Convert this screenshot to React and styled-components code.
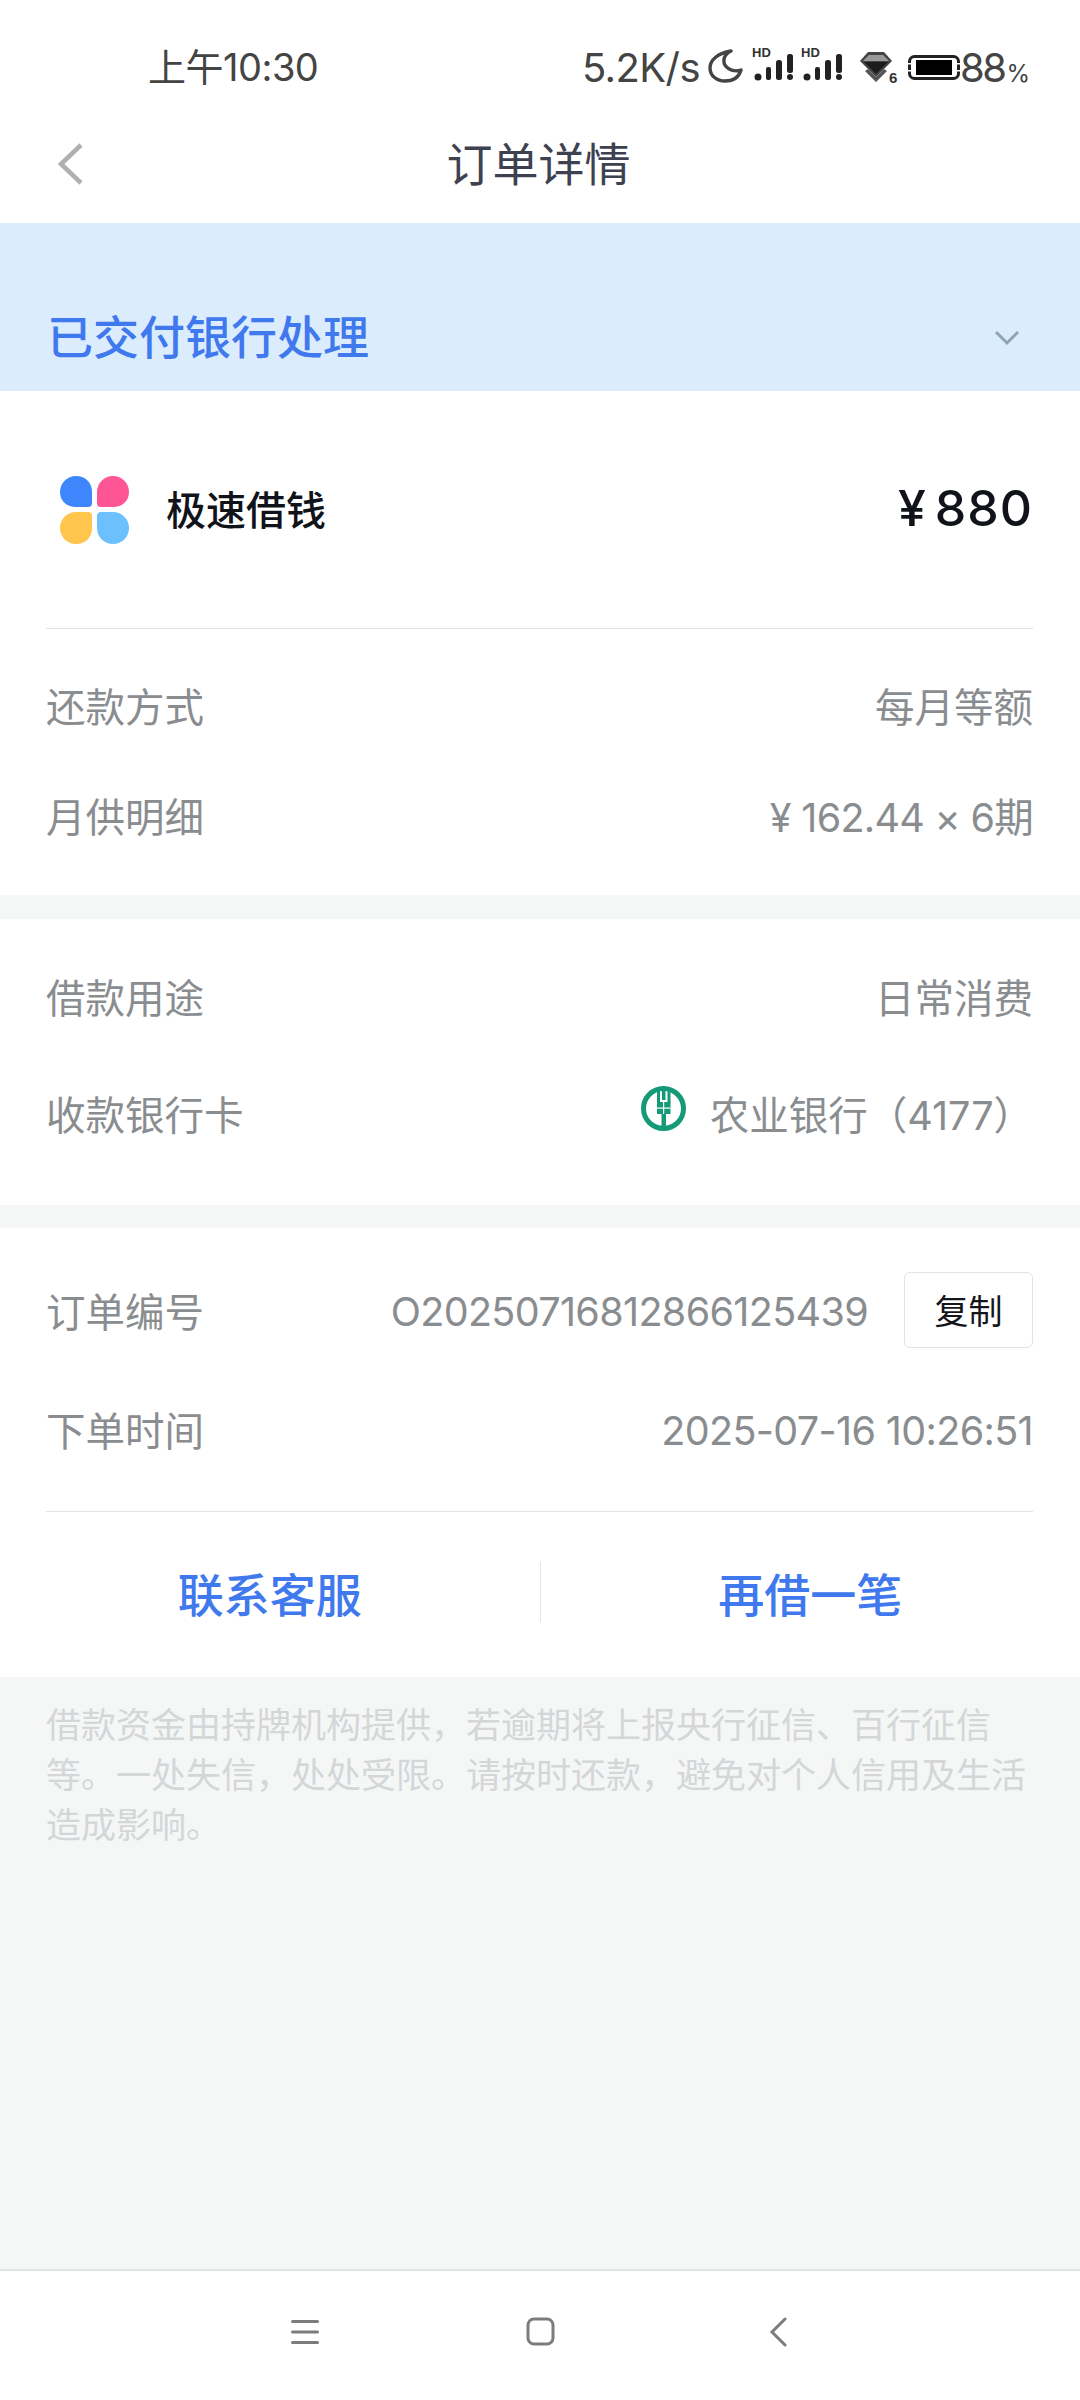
import styled, { createGlobalStyle } from 'styled-components';

const GlobalStyle = createGlobalStyle`
  html, body {
    margin: 0;
    padding: 0;
    background: #f5f7f7;
    font-family: "Inter", "Noto Sans CJK SC", sans-serif;
  }
  * { box-sizing: border-box; }
`;

const Page = styled.div`
  width: 1080px;
  height: 2400px;
  display: flex;
  flex-direction: column;
  overflow: hidden;
  background: #f5f7f7;
`;

const StatusBar = styled.div`
  height: 104px;
  padding: 30px 50px 0 148px;
  display: flex;
  align-items: center;
  justify-content: space-between;
  background: #fff;
  color: #444;
  font-size: 38px;
`;

const Time = styled.span`
  letter-spacing: -0.5px;
  padding-bottom: 6px;
`;

const StatusRight = styled.div`
  display: flex;
  align-items: center;
`;

const Speed = styled.span`
  font-size: 40px;
  letter-spacing: -0.6px;
  margin-right: 8px;
`;

const Percent = styled.span`
  font-size: 40px;
  letter-spacing: -2.5px;

  small {
    font-size: 24px;
    letter-spacing: 0;
    margin-left: 2px;
  }
`;

const Icon = styled.svg`
  display: block;
  flex: none;
  margin-left: ${props => props.$left || 0}px;
  margin-bottom: ${props => props.$up || 0}px;
`;

const NavBar = styled.div`
  position: relative;
  height: 119px;
  padding: 0 3px 6px 0;
  display: flex;
  align-items: center;
  justify-content: center;
  background: #fff;
`;

const BackIcon = styled.svg`
  position: absolute;
  left: 56px;
  top: 38px;
`;

const NavTitle = styled.div`
  font-size: 46px;
  color: #3e4150;
`;

const Banner = styled.div`
  height: 168px;
  padding: 0 60px 24px 47px;
  display: flex;
  align-items: flex-end;
  justify-content: space-between;
  background: #dbecfd;
`;

const BannerText = styled.div`
  font-size: 46px;
  line-height: 60px;
  font-weight: 500;
  color: #4078ee;
`;

const BannerChevron = styled.svg`
  margin: 0 0 21px;
`;

const Section = styled.div`
  background: #fff;
  padding: ${props => props.$top}px 47px ${props => props.$bottom}px 46px;
  margin-bottom: ${props => props.$gap || 0}px;
`;

const Product = styled.div`
  height: 237px;
  padding-bottom: 3px;
  display: flex;
  align-items: center;
  justify-content: space-between;
`;

const ProductName = styled.div`
  display: flex;
  align-items: center;
  gap: 37px;
  font-size: 40px;
  font-weight: 500;
  color: #10131a;
`;

const Logo = styled.svg`
  display: block;
  margin: 3px 0 0 14px;
`;

const Price = styled.div`
  font-size: 50px;
  font-weight: 500;
  letter-spacing: 1px;
  color: #10131a;

  span {
    margin-right: 8px;
  }
`;

const Divider = styled.div`
  height: 1px;
  margin-bottom: ${props => props.$after || 0}px;
  background: #e2e3e5;
`;

const Row = styled.div`
  height: ${props => props.$height}px;
  display: flex;
  align-items: center;
  justify-content: space-between;
  font-size: 39.5px;
  color: #8a8d90;
  margin-bottom: ${props => props.$after || 0}px;
`;

const Label = styled.span`
  padding-bottom: 5px;
`;

const Value = styled.div`
  display: flex;
  align-items: center;
  padding-bottom: ${props => props.$numeric ? 0 : 5}px;
  letter-spacing: ${props => props.$spacing || 0}px;
`;

const BankIcon = styled.svg`
  margin: -8px 24px 0 0;
`;

const CopyButton = styled.div`
  width: 129px;
  height: 76px;
  margin: -4px 0 0 36px;
  display: flex;
  align-items: center;
  justify-content: center;
  border: 1px solid #e3e3e3;
  border-radius: 6px;
  font-size: 34px;
  letter-spacing: 0;
  color: #14161c;
`;

const Actions = styled.div`
  height: 165px;
  margin: 0 -47px 0 -46px;
  padding-bottom: 5px;
  display: flex;
  align-items: center;
`;

const ActionButton = styled.div`
  flex: 1;
  text-align: center;
  font-size: 46px;
  font-weight: 500;
  color: #4078ee;
`;

const ActionLine = styled.div`
  width: 1px;
  height: 60px;
  background: #e6e6e6;
`;

const Note = styled.p`
  margin: 0;
  padding: 23px 46px 0;
  font-size: 35px;
  line-height: 50px;
  color: #d4d6d7;
`;

const SystemBar = styled.div`
  margin-top: auto;
  height: 131px;
  padding: 0 0 8px 291px;
  display: flex;
  align-items: center;
  background: #fff;
  border-top: 2px solid #e2e5e5;
`;

const SignalIcon = ({ left }) => (
  <Icon $left={left} $up={6} width="42" height="36" viewBox="0 0 42 36">
    <text x="0" y="11" fontSize="13" fontWeight="700" fill="#333" fontFamily="Liberation Sans">HD</text>
    <circle cx="6" cy="31" r="3.5" fill="#222" />
    <rect x="14" y="21" width="5" height="13" rx="2" fill="#222" />
    <rect x="24" y="14" width="6" height="20" rx="2.5" fill="#222" />
    <rect x="35" y="8" width="6" height="19" rx="2.5" fill="#222" />
    <circle cx="38" cy="31" r="3" fill="#222" />
  </Icon>
);

const App = () => {
  return (
    <Page>
      <GlobalStyle />
      <StatusBar>
        <Time>上午10:30</Time>
        <StatusRight>
          <Speed>5.2K/s</Speed>
          <Icon $up={2} width="35" height="34" viewBox="0 0 35 34">
            <path d="M23 2 C10 4 2 11 2 19 C2 27 9 32 17 32 C25 32 31 28 33 21 C24 24 15 18 16 11 C16 7 19 4 23 2 Z" fill="none" stroke="#444" strokeWidth="3.4" strokeLinejoin="round" />
          </Icon>
          <SignalIcon left={9} />
          <SignalIcon left={7} />
          <Icon $left={17} width="39" height="33" viewBox="0 0 39 33">
            <polygon points="8,1 24,1 32,10 16,26 0,10" fill="#444" />
            <polygon points="3,10 9,4 23,4 29,10" fill="#9a9a9a" />
            <polygon points="4,11 28,11 16,23" fill="#1c1c1c" />
            <polygon points="5,20 16,31 27,20 24,18 16,26 8,18" fill="#555" />
            <text x="29" y="32" fontSize="15" fontWeight="700" fill="#333" fontFamily="Liberation Sans">6</text>
          </Icon>
          <Icon $left={9} width="52" height="25" viewBox="0 0 52 25">
            <rect x="1.5" y="1.5" width="49" height="22" rx="5" fill="none" stroke="#222" strokeWidth="3" />
            <rect x="8" y="5" width="36" height="15" fill="#000" />
            <rect x="0" y="8" width="3" height="1.5" fill="#fff" />
            <rect x="0" y="15" width="3" height="1.5" fill="#fff" />
            <rect x="49" y="8" width="3" height="1.5" fill="#fff" />
            <rect x="49" y="15" width="3" height="1.5" fill="#fff" />
          </Icon>
          <Percent>88<small>%</small></Percent>
        </StatusRight>
      </StatusBar>
      <NavBar>
        <BackIcon width="28" height="44" viewBox="0 0 28 44">
          <path d="M25 3 L5 22 L25 41" fill="none" stroke="#b0b0b4" strokeWidth="4.5" />
        </BackIcon>
        <NavTitle>订单详情</NavTitle>
      </NavBar>
      <Banner>
        <BannerText>已交付银行处理</BannerText>
        <BannerChevron width="26" height="16" viewBox="0 0 26 16">
          <path d="M2 2 L13 13 L24 2" fill="none" stroke="#8ea4b8" strokeWidth="3" />
        </BannerChevron>
      </Banner>
      <Section $top={0} $bottom={23} $gap={24}>
        <Product>
          <ProductName>
            <Logo width="69" height="68" viewBox="0 0 69 68">
              <path d="M16 0 C26 0 32 7 32 16 L32 27 Q32 31 28 31 L16 31 C7 31 0 25 0 16 C0 7 7 0 16 0 Z" fill="#3d86fb" />
              <path d="M53 0 C62 0 69 7 69 16 C69 25 62 31 53 31 L41 31 Q37 31 37 27 L37 16 C37 7 44 0 53 0 Z" fill="#fd5595" />
              <path d="M16 68 C7 68 0 61 0 52 C0 43 7 36 16 36 L28 36 Q32 36 32 40 L32 52 C32 61 26 68 16 68 Z" fill="#ffc54d" />
              <path d="M53 68 C44 68 37 61 37 52 L37 40 Q37 36 41 36 L53 36 C62 36 69 43 69 52 C69 61 62 68 53 68 Z" fill="#6cc0fd" />
            </Logo>
            极速借钱
          </ProductName>
          <Price><span>¥</span>880</Price>
        </Product>
        <Divider $after={23} />
        <Row $height={110}><Label>还款方式</Label><Value>每月等额</Value></Row>
        <Row $height={110}><Label>月供明细</Label><Value $spacing={-0.7}>¥ 162.44 × 6期</Value></Row>
      </Section>
      <Section $top={20} $bottom={32} $gap={23}>
        <Row $height={117}><Label>借款用途</Label><Value>日常消费</Value></Row>
        <Row $height={117}>
          <Label>收款银行卡</Label>
          <Value>
            <BankIcon width="45" height="45" viewBox="0 0 45 45">
              <circle cx="22.5" cy="22.5" r="20" fill="none" stroke="#159a78" strokeWidth="5" />
              <rect x="16" y="2" width="3" height="15" fill="#159a78" />
              <rect x="26.5" y="2" width="3" height="15" fill="#159a78" />
              <rect x="21" y="0" width="3.5" height="14" fill="#159a78" />
              <rect x="16" y="16" width="13.5" height="12" fill="#159a78" />
              <rect x="20.5" y="27" width="4.5" height="17" fill="#159a78" />
              <rect x="16" y="21.5" width="13.5" height="1.2" fill="#fff" />
              <rect x="22" y="16" width="1.2" height="12" fill="#fff" />
            </BankIcon>
            农业银行（4177）
          </Value>
        </Row>
      </Section>
      <Section $top={24} $bottom={0}>
        <Row $height={119}>
          <Label>订单编号</Label>
          <Value $numeric $spacing={-0.65}>O20250716812866125439<CopyButton>复制</CopyButton></Value>
        </Row>
        <Row $height={119} $after={21}><Label>下单时间</Label><Value $numeric $spacing={-0.65}>2025-07-16 10:26:51</Value></Row>
        <Divider />
        <Actions>
          <ActionButton>联系客服</ActionButton>
          <ActionLine />
          <ActionButton>再借一笔</ActionButton>
        </Actions>
      </Section>
      <Note>借款资金由持牌机构提供，若逾期将上报央行征信、百行征信等。一处失信，处处受限。请按时还款，避免对个人信用及生活造成影响。</Note>
      <SystemBar>
        <Icon width="28" height="26" viewBox="0 0 28 26">
          <path d="M1.5 2.5 H26.5 M1.5 13 H26.5 M1.5 23.5 H26.5" stroke="#7c7c7c" strokeWidth="3" strokeLinecap="round" />
        </Icon>
        <Icon $left={207} width="29" height="29" viewBox="0 0 29 29">
          <rect x="2" y="2" width="25" height="25" rx="6" fill="none" stroke="#7c7c7c" strokeWidth="3" />
        </Icon>
        <Icon $left={214} width="18" height="30" viewBox="0 0 18 30">
          <path d="M16 2 L3 15 L16 28" fill="none" stroke="#7c7c7c" strokeWidth="3" strokeLinecap="round" />
        </Icon>
      </SystemBar>
    </Page>
  );
};

export default App;
